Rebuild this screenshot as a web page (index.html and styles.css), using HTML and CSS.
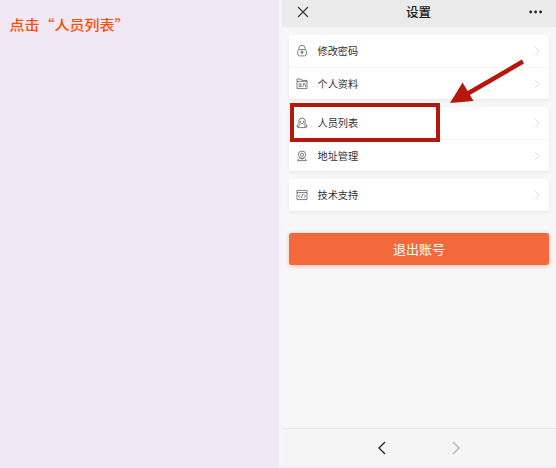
FILE: index.html
```html
<!DOCTYPE html>
<html lang="zh-CN">
<head>
<meta charset="utf-8">
<title>设置</title>
<link rel="stylesheet" href="styles.css">
</head>
<body>
<main class="page">
  <aside class="note"><p class="note-text">点击“人员列表”</p></aside>
  <section class="phone">
    <header class="bar">
      <svg class="close" viewBox="0 0 12 12"><path d="M1 1l10 10M11 1L1 11"/></svg>
      <h1 class="title">设置</h1>
      <svg class="more" viewBox="0 0 14 4"><circle cx="1.7" cy="2" r="1.4"/><circle cx="6.6" cy="2" r="1.4"/><circle cx="11.6" cy="2" r="1.4"/></svg>
    </header>
    <div class="content">
      <ul class="card">
        <li class="row">
          <svg class="icon" viewBox="0 0 12 12"><path d="M2.8 4.6V3.5a3.2 3.2 0 0 1 6.4 0v1.1M2.8 4.6h6.4q1.4 1.1 1.4 3.1 0 2.8-2 3.2H3.4q-2-.4-2-3.2 0-2 1.4-3.1z"/><circle cx="6" cy="7" r="1.1"/><path d="M6 7v2.2"/></svg>
          <span class="label">修改密码</span>
          <svg class="chevron" viewBox="0 0 6 10"><path d="M1 1l4 4-4 4"/></svg>
        </li>
        <li class="row">
          <svg class="icon" viewBox="0 0 12 12"><path d="M1 10.6V1h4l.8 1.4H11v8.2zM1 3.4h10M2.6 5.8h3M2.6 7.2h3M2.6 8.6h3M6.9 9.1V7.6l.5-.4V5.6h1.7v1.6l.5.4v1.5"/></svg>
          <span class="label">个人资料</span>
          <svg class="chevron" viewBox="0 0 6 10"><path d="M1 1l4 4-4 4"/></svg>
        </li>
      </ul>
      <ul class="card">
        <li class="row">
          <svg class="icon" viewBox="0 0 12 12"><path d="M3.3 6.5Q2.6 5.5 2.8 3.6 3.3 1 6 1t3.2 2.6q.2 1.9-.5 2.9M4.2 3.6q-.3 3 1.8 3t1.8-3M3.3 6.3Q.9 7.3.9 10h2M8.7 6.3q2.4 1 2.4 3.7h-2M4.1 7.1q-1.4 1-1.4 3.5h6.6q0-2.5-1.4-3.5"/></svg>
          <span class="label">人员列表</span>
          <svg class="chevron" viewBox="0 0 6 10"><path d="M1 1l4 4-4 4"/></svg>
        </li>
        <li class="row">
          <svg class="icon" viewBox="0 0 12 12"><circle cx="6" cy="4.7" r="3.7"/><circle cx="6" cy="4.7" r="1.6"/><path d="M3.9 7.8L6 9.2l2.1-1.4M3 8.5L1.5 10.6h9L9 8.5"/></svg>
          <span class="label">地址管理</span>
          <svg class="chevron" viewBox="0 0 6 10"><path d="M1 1l4 4-4 4"/></svg>
        </li>
        <li class="highlight" aria-hidden="true"></li>
      </ul>
      <ul class="card">
        <li class="row">
          <svg class="icon" viewBox="0 0 12 12"><path d="M1 1.4h10v9.2H1zM1 3.6h10M4 5.4L2.4 7.1 4 8.8M8 5.4l1.6 1.7L8 8.8M6.8 5.1L5.2 9.1"/></svg>
          <span class="label">技术支持</span>
          <svg class="chevron" viewBox="0 0 6 10"><path d="M1 1l4 4-4 4"/></svg>
        </li>
      </ul>
      <button class="logout" type="button">退出账号</button>
    </div>
    <nav class="nav">
      <svg class="arrow" viewBox="0 0 8 14"><path d="M7 1L1 7l6 6"/></svg>
      <svg class="arrow disabled" viewBox="0 0 8 14"><path d="M1 1l6 6-6 6"/></svg>
    </nav>
    <svg class="pointer" viewBox="0 0 76 46"><path d="M74 2.5L18 35"/><polygon points="1,44 13.6,23.5 24.5,42"/></svg>
  </section>
</main>
</body>
</html>
```
FILE: styles.css
```css
* { box-sizing: border-box; }
body {
  margin: 0;
  background: #f0e8f5;
  font-family: "Noto Sans CJK SC", sans-serif;
  color: #333;
}
.page {
  display: grid;
  grid-template-columns: 279px 277px;
  height: 468px;
  overflow: hidden;
}
.note { padding: 15px 0 0 9.5px; }
.note-text {
  margin: 0;
  font-size: 15px;
  line-height: 20px;
  font-weight: 500;
  color: #ff4d00;
  white-space: nowrap;
  transform: scaleY(0.88);
}
.phone {
  position: relative;
  display: flex;
  flex-direction: column;
  height: 467px;
  border-left: 3px solid #f7f5fa;
  background: #f7f7f7;
}
.bar {
  display: grid;
  grid-template-columns: 1fr auto 1fr;
  align-items: center;
  height: 27px;
  padding: 0 13px 4px 15px;
  background: #ebebeb;
}
.close { width: 12px; height: 12px; fill: none; stroke: #333; stroke-width: 1.1; }
.title { margin: 0 3px 0 0; font-size: 12.5px; line-height: 20px; font-weight: 500; color: #1c1c1c; }
.more { width: 14px; height: 4px; justify-self: end; fill: #222; }
.content { flex: 1; padding: 8px 7px 0 7px; }
.card {
  position: relative;
  margin: 0 0 7.5px;
  padding: 0;
  list-style: none;
  background: #fff;
  box-shadow: 0 1px 3px rgba(0, 0, 0, 0.08);
}
.row { display: flex; align-items: center; height: 32.2px; padding: 0 9px 0 6.5px; }
.row + .row { border-top: 1px solid #f4f4f4; }
.icon { width: 12px; height: 12px; fill: none; stroke: #555; stroke-width: 0.75; }
.label { flex: 1; margin-left: 10px; font-size: 10.2px; line-height: 16px; }
.chevron { width: 6px; height: 10px; fill: none; stroke: #d6d6d6; stroke-width: 0.8; }
.highlight {
  position: absolute;
  left: 0.5px;
  top: -4px;
  width: 150.5px;
  height: 39px;
  border: 4px solid #b5170b;
}
.logout {
  display: block;
  width: 100%;
  height: 32px;
  margin-top: 22px;
  padding: 0;
  border: 0;
  border-radius: 2.5px;
  background: #f4693b;
  box-shadow: 0 1px 4px rgba(244, 105, 59, 0.4);
  font: 400 13px/31px "Noto Sans CJK SC", sans-serif;
  color: #fff;
}
.nav {
  display: flex;
  align-items: center;
  gap: 66px;
  height: 39px;
  padding-left: 96px;
  border-top: 1px solid #e9e9e9;
  background: #f5f5f5;
}
.arrow { width: 8px; height: 14px; fill: none; stroke: #222; stroke-width: 1.3; }
.disabled { stroke: #b5b5b5; }
.pointer { position: absolute; left: 167px; top: 59px; width: 76px; height: 46px; fill: #b5170b; }
.pointer path { stroke: #b5170b; stroke-width: 4.5; }
```
